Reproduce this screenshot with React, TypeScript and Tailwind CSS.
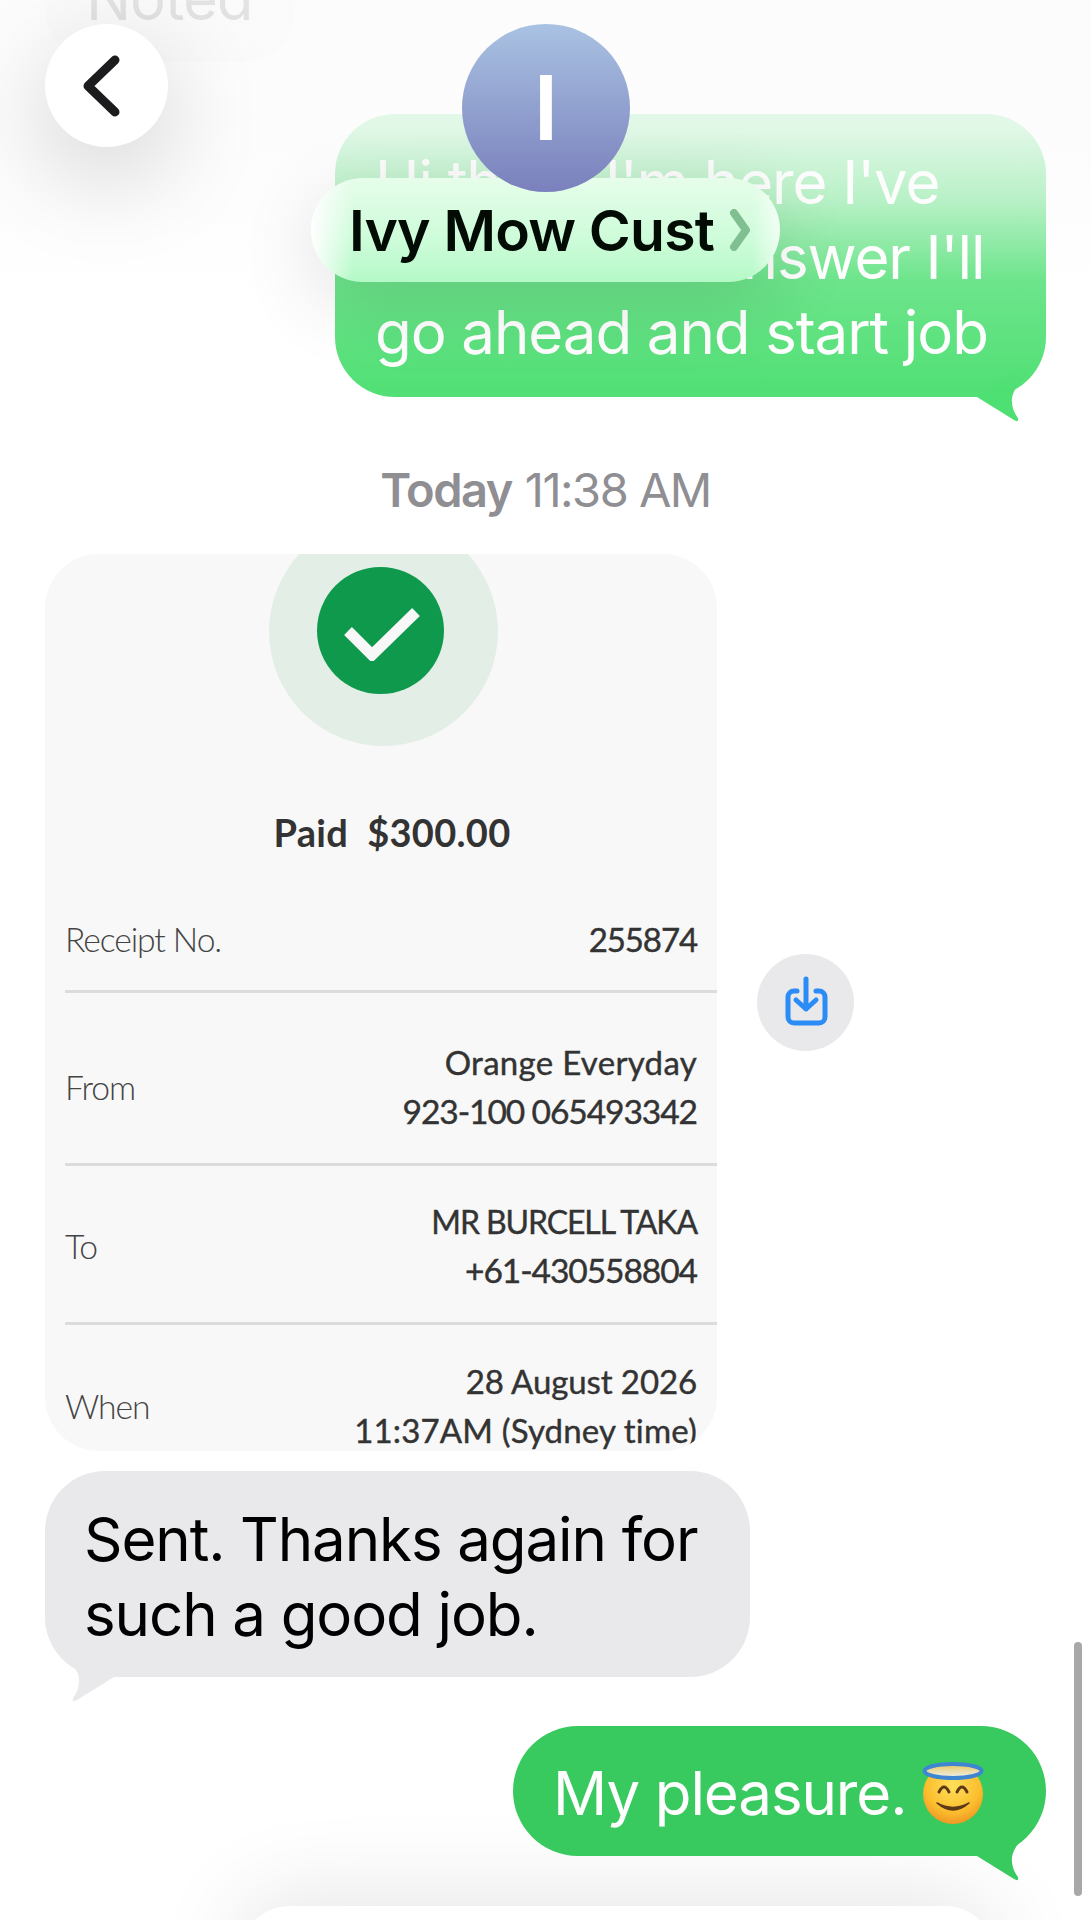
import { ReactNode } from "react"

// bubble tail, drawn for the right side; flip it for incoming messages
const Tail = ({ color, flip }: { color: string; flip?: boolean }) => (
  <svg
    width="70"
    height="56"
    viewBox="0 0 70 56"
    className={flip ? "absolute left-0 bottom-[-26px] -scale-x-100" : "absolute right-0 bottom-[-26px]"}
  >
    <path
      d="M1 30 L38 53 Q43 56 42 51 Q35 42 36 31 Q38 18 58 2 L40 0 Z"
      fill={color}
    />
  </svg>
)

const HaloEmoji = () => (
  <svg width="62" height="62" viewBox="0 0 62 62" className="shrink-0">
    <defs>
      <radialGradient id="face" cx="50%" cy="35%" r="70%">
        <stop offset="0%" stopColor="#ffe05a" />
        <stop offset="65%" stopColor="#fbbd2d" />
        <stop offset="100%" stopColor="#ec8f22" />
      </radialGradient>
      <linearGradient id="halo" x1="0" y1="0" x2="0" y2="1">
        <stop offset="0%" stopColor="#e9c65a" />
        <stop offset="100%" stopColor="#eef1f2" />
      </linearGradient>
    </defs>
    <circle cx="31" cy="32" r="30" fill="url(#face)" />
    <ellipse cx="31" cy="9" rx="28.5" ry="7" fill="url(#halo)" stroke="#3f86d2" strokeWidth="4" />
    <path d="M17 30 Q22 20 27 30 M35 30 Q40 20 45 30" fill="none" stroke="#5c3a16" strokeWidth="3" strokeLinecap="round" />
    <path d="M15 41 Q31 50 47 41 Q31 55 15 41 Z" fill="#5c3a16" stroke="#5c3a16" strokeWidth="1.5" strokeLinejoin="round" />
  </svg>
)

const ReceiptRow = ({ label, children, className }: { label: string; children: ReactNode; className: string }) => (
  <div className={`flex items-center justify-between pr-[20px] ml-[20px] ${className}`}>
    <span className="text-[33.7px] font-light text-[#444444]">{label}</span>
    <div className="text-right text-[33px] leading-[49px] text-[#333333] whitespace-nowrap [-webkit-text-stroke:0.4px_#333333]">
      {children}
    </div>
  </div>
)

const Receipt = () => (
  <div className="w-[672px] h-[897px] shrink-0 rounded-[54px] bg-[#f8f8f8] overflow-hidden font-[Lato,sans-serif]">
    <div className="flex justify-center">
      <div className="w-[229px] h-[229px] -mt-[37px] ml-[5px] rounded-full bg-[#e2eee6] flex items-center justify-center">
        <div className="w-[127px] h-[127px] -ml-[6px] -mt-[2px] rounded-full bg-[#0e994c] flex items-center justify-center">
          <svg width="80" height="60" viewBox="0 0 80 60">
            <path d="M7 30 L31 54 L75 11" fill="none" stroke="#f8f8f8" strokeWidth="11" />
          </svg>
        </div>
      </div>
    </div>
    <div className="mt-[63px] pl-[22px] text-center text-[38px] leading-[46px] font-bold tracking-[0.3px] text-[#333333] whitespace-pre">
      Paid  $300.00
    </div>
    <ReceiptRow label="Receipt No." className="mt-[60px] h-[49px]">
      255874
    </ReceiptRow>
    <div className="mt-[26px] ml-[20px] border-b-[3px] border-[#dcdcdc]" />
    <ReceiptRow label="From" className="pt-[45px] pb-[27px]">
      <span className="tracking-[0.3px]">Orange Everyday</span>
      <br />
      <span className="text-[33.6px]">923-100 065493342</span>
    </ReceiptRow>
    <div className="ml-[20px] border-b-[3px] border-[#dcdcdc]" />
    <ReceiptRow label="To" className="pt-[31px] pb-[27px]">
      <span className="text-[32px] tracking-[-1.1px]">MR BURCELL TAKA</span>
      <br />
      <span className="text-[33.6px]">+61-430558804</span>
    </ReceiptRow>
    <div className="ml-[20px] border-b-[3px] border-[#dcdcdc]" />
    <ReceiptRow label="When" className="pt-[32px]">
      <span className="tracking-[-0.1px]">28 August 2026</span>
      <br />
      <span className="tracking-[0.15px]">11:37AM (Sydney time)</span>
    </ReceiptRow>
  </div>
)

const App = () => {
  return (
    <div className="relative w-[1091px] h-[1920px] overflow-hidden bg-white font-[Inter,sans-serif] text-[60px] leading-[75px] tracking-[-1.1px]">
      {/* messages */}
      <div className="flex flex-col pl-[45px] pr-[45px]">
        <div className="self-start -mt-[68px] w-[250px] h-[130px] rounded-[52px] bg-[#ececec] pl-[41px] pt-[29px] text-black">
          Noted
        </div>

        <div className="relative self-end mt-[52px] w-[711px] h-[283px] rounded-[60px] bg-[#52e076] pl-[40px] pt-[31px] text-white whitespace-nowrap">
          Hi there I'm here I've
          <br />
          knocked no answer I'll
          <br />
          go ahead and start job
          <Tail color="#4fe074" />
        </div>

        <div className="mt-[65px] h-[56px] flex items-center justify-center gap-[13px] text-[47px] leading-[56px] tracking-[-1.5px] text-[#8e8e93]">
          <span className="font-semibold">Today</span>
          <span>11:38 AM</span>
        </div>

        <div className="mt-[36px] flex items-center gap-[40px]">
          <Receipt />
          <div className="w-[97px] h-[97px] rounded-full bg-[#e9e9eb] flex items-center justify-center">
            <svg width="97" height="97" viewBox="0 0 97 97" fill="none" stroke="#2b8cf5" strokeWidth="5" strokeLinecap="round" strokeLinejoin="round">
              <path d="M40 37 H37 a6 6 0 0 0 -6 6 v20 a6 6 0 0 0 6 6 h25 a6 6 0 0 0 6 -6 V43 a6 6 0 0 0 -6 -6 h-3" />
              <path d="M49 25 V55 M39 46 L49 55 L59 46" />
            </svg>
          </div>
        </div>

        <div className="relative self-start mt-[20px] w-[705px] h-[206px] rounded-[60px] bg-[#e9e9eb] pl-[39px] pt-[31px] text-black whitespace-nowrap">
          Sent. Thanks again for
          <br />
          such a good job.
          <Tail color="#e9e9eb" flip />
        </div>

        <div className="relative self-end mt-[49px] w-[533px] h-[130px] rounded-[65px] bg-[#38c95f] pl-[40px] pt-[4px] flex items-center gap-[16px] text-white whitespace-nowrap">
          <span>My pleasure.</span>
          <HaloEmoji />
          <Tail color="#38c95f" />
        </div>

        <div className="mt-[50px] ml-[195px] w-[755px] h-[200px] rounded-[50px] bg-white shadow-[0_-10px_90px_rgba(0,0,0,0.1)]" />
      </div>

      {/* scroll indicator */}
      <div className="absolute right-[9px] top-[1642px] w-[8px] h-[254px] rounded-full bg-[#a8a8a8]" />

      {/* nav bar fade */}
      <div className="absolute inset-x-0 top-0 h-[400px] bg-[linear-gradient(to_bottom,rgba(252,252,252,0.9)_0px,rgba(252,252,252,0.84)_130px,rgba(252,252,252,0.6)_200px,rgba(252,252,252,0.16)_280px,rgba(252,252,252,0)_390px)]" />

      <button className="absolute left-[45px] top-[24px] w-[123px] h-[123px] rounded-full bg-white shadow-[0_30px_100px_rgba(0,0,0,0.18)]">
        <svg width="123" height="123" viewBox="0 0 123 123" fill="none" stroke="#1c1c1e" strokeWidth="9" strokeLinecap="round" strokeLinejoin="round">
          <path d="M70 36 L43 62 L70 88" />
        </svg>
      </button>

      <div className="absolute left-[311px] top-[178px] w-[469px] h-[104px] rounded-[52px] bg-[linear-gradient(to_right,#ffffff_0%,rgba(255,255,255,0)_9%,rgba(255,255,255,0)_94%,rgba(255,255,255,0.7)_100%),linear-gradient(to_bottom,#e6fdea_0%,#cdfcd9_60%,#b4f9c7_100%)] shadow-[0_20px_80px_rgba(0,0,0,0.12)] flex items-center pl-[38px] gap-[15px] text-[57px] leading-none font-semibold tracking-[-0.8px] text-[#020c05] whitespace-nowrap">
        <span>Ivy Mow Cust</span>
        <svg width="22" height="42" viewBox="0 0 22 42" fill="none" stroke="#7fbf90" strokeWidth="8" strokeLinecap="round" strokeLinejoin="round">
          <path d="M5 4 L17 21 L5 38" />
        </svg>
      </div>

      <div className="absolute left-[462px] top-[24px] w-[168px] h-[168px] rounded-full bg-gradient-to-b from-[#a9c2e2] to-[#7a80bc] flex items-center justify-center text-[90px] font-semibold text-white leading-none tracking-normal">
        I
      </div>
    </div>
  )
}

export default App
